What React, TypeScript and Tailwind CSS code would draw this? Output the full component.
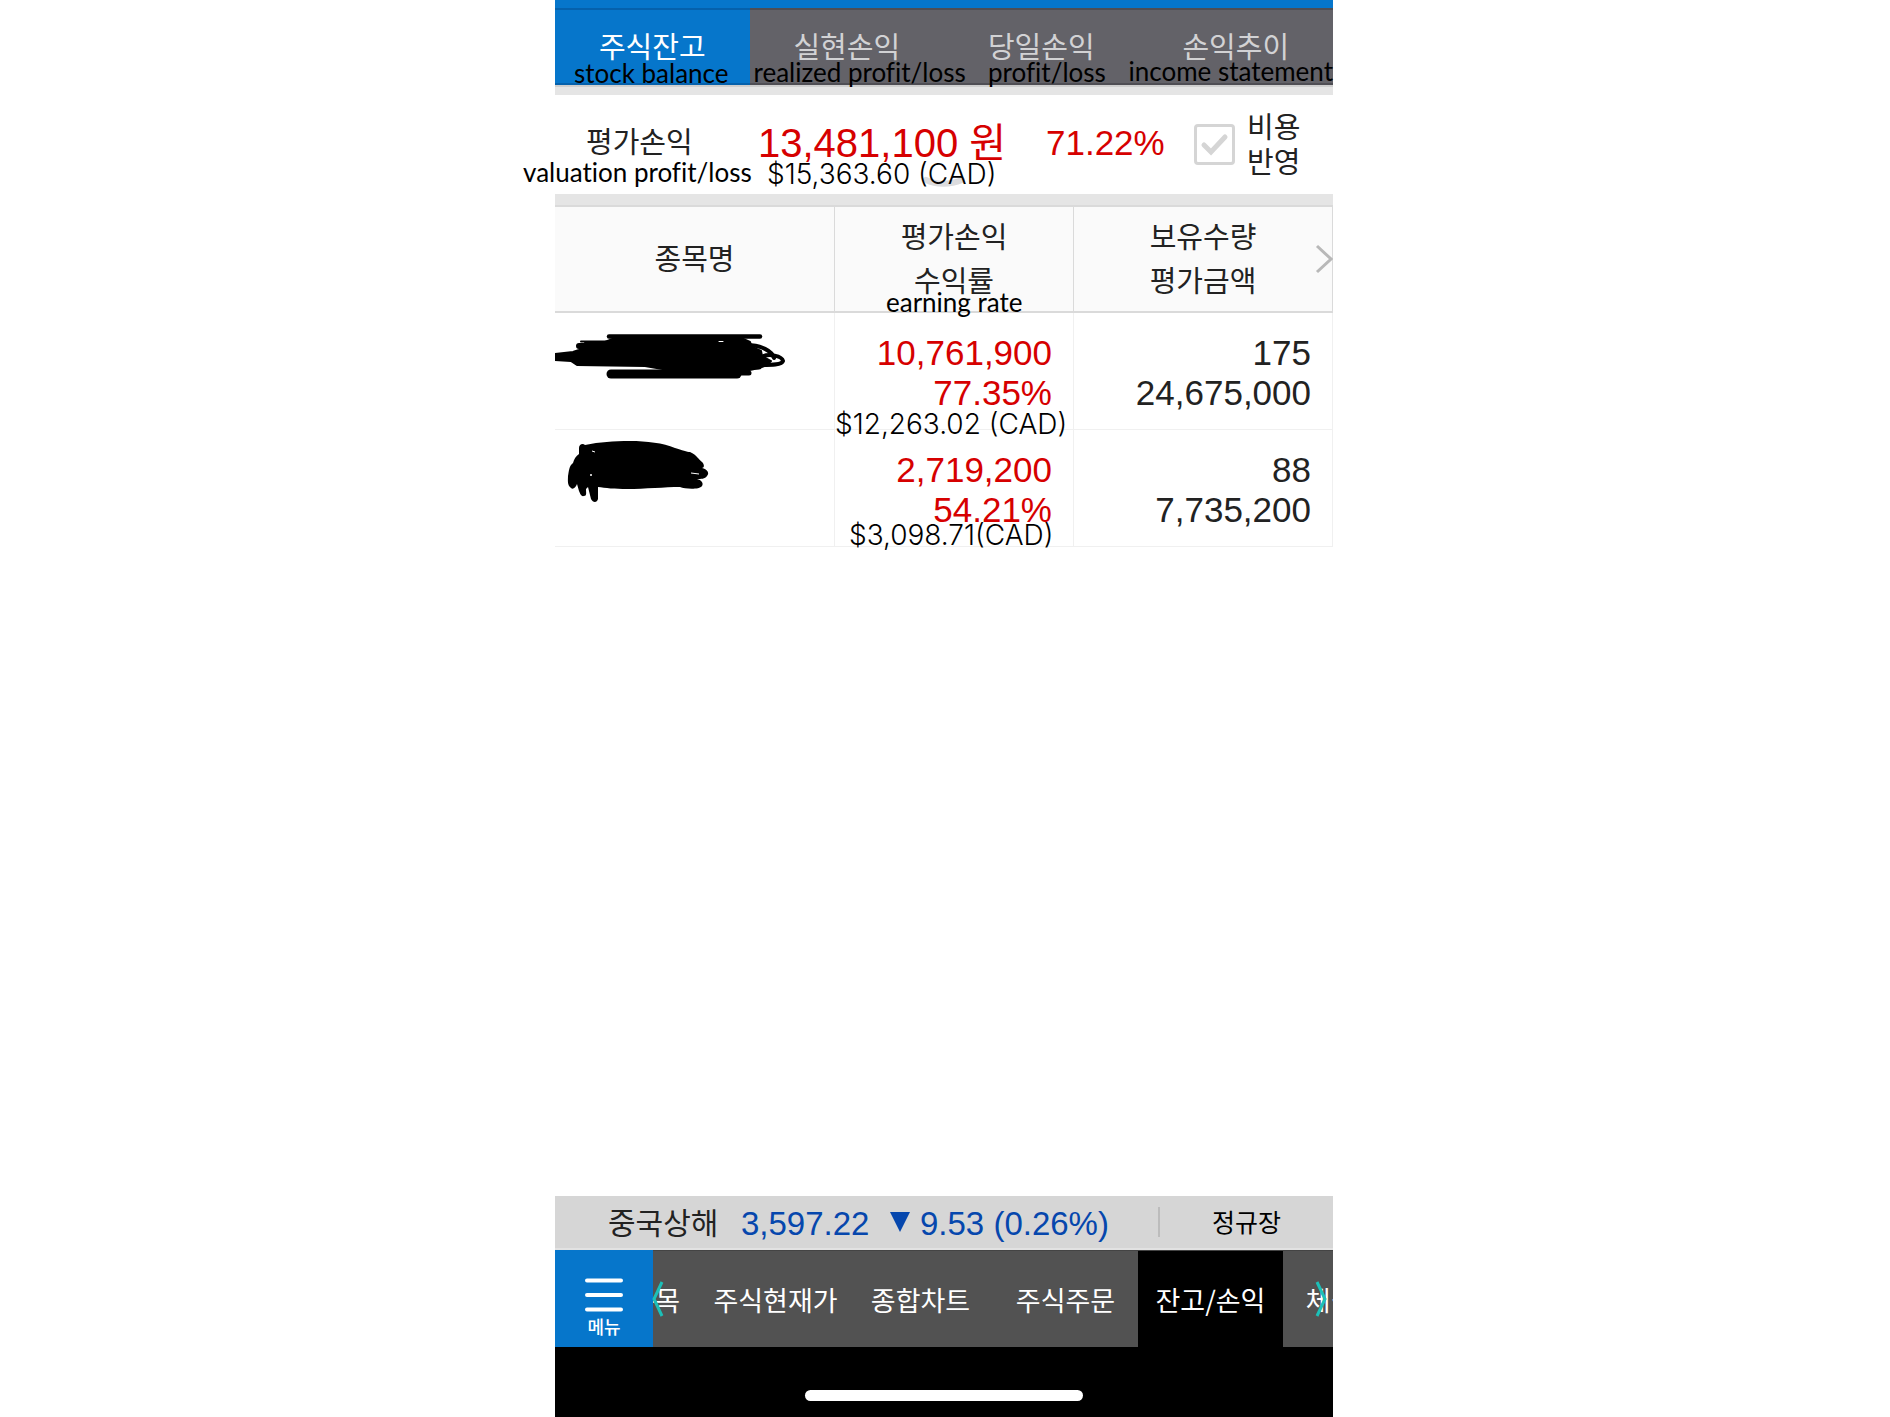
import React from "react";

const KR = "font-['Noto_Sans_CJK_KR',sans-serif]";
const NUM = "font-['Liberation_Sans','Noto_Sans_CJK_KR',sans-serif]";
const NOTE =
  "pointer-events-none absolute whitespace-nowrap font-['Lato',sans-serif] text-[26px] font-normal leading-8 text-black [font-variant-ligatures:none]";
const MONEY =
  "pointer-events-none absolute whitespace-nowrap font-['Inter',sans-serif] text-[28px] font-light leading-8 text-black";

const tabs = [
  { label: "주식잔고", note: "stock balance", pos: "left-[19px] top-[47px]" },
  { label: "실현손익", note: "realized profit/loss", pos: "left-[4px] top-[46px]" },
  { label: "당일손익", note: "profit/loss", pos: "left-[44px] top-[46px]" },
  { label: "손익추이", note: "income statement", pos: "right-0 top-[45px]" },
];

const holdings = [
  {
    gain: "10,761,900",
    rate: "77.35%",
    qty: "175",
    value: "24,675,000",
    note: "$12,263.02 (CAD)",
    pos: "left-0 top-[95px]",
    scribble: <ScribbleWide />,
  },
  {
    gain: "2,719,200",
    rate: "54.21%",
    qty: "88",
    value: "7,735,200",
    note: "$3,098.71(CAD)",
    pos: "left-[14px] top-[89px]",
    scribble: <ScribbleBlob />,
  },
];

const shortcuts = ["관심종목", "주식현재가", "종합차트", "주식주문", "잔고/손익", "체결내역"];

function ScribbleWide() {
  return (
    <svg viewBox="0 0 279 116" className="block h-[116px] w-[279px]" role="img" aria-label="Hidden name" fill="none" stroke="#000" strokeLinecap="round" strokeLinejoin="round">
      <path d="M54 23.500H205" strokeWidth="4.500" />
      <path d="M26 28.500H60" strokeWidth="2" />
      <path d="M56 61H182" strokeWidth="9" />
      <path d="M176 60H194M184 54H204" strokeWidth="5" />
      <path
        d="M0 41L18 39L24 37L32 34L30 29L50 29L60 25L186 25L195 29L197 34L206 38L207 43L216 48L212 52L204 55L190 58L175 59H125L90 53L22 52L16 48L0 47Z"
        fill="#000"
        strokeWidth="2"
      />
      <path d="M24 33H60M0 44H20" strokeWidth="6" />
      <path d="M192 32C206 32 217 38 219 45" strokeWidth="4" />
      <path d="M206 44C214 40 227 43 228 48C227 52 216 52 206 52" strokeWidth="4" />
      <path d="M168 28.500H164" stroke="#fff" strokeWidth="1" />
    </svg>
  );
}

function ScribbleBlob() {
  return (
    <svg viewBox="0 0 279 116" className="block h-[116px] w-[279px]" role="img" aria-label="Hidden name">
      <path
        d="M24 18C24 14 28 13 30 15C45 12 58 11 75 11C92 11 108 13 120 18C127 20 132 22 135 22C142 25 144 30 147 32C150 35 149 38 147 38C152 39 155 43 152 46C150 49 146 49 142 49C146 50 149 53 147 56C144 60 130 59 125 57C110 57 90 59 72 59C60 59 50 58 43 57V69C42 73 38 73 36 69L33 57L31 59C31 63 32 66 29 66C26 67 25 63 24 61L22 54C21 57 18 60 16 58C12 55 13 50 13 46C14 41 14 36 18 33C19 29 21 26 24 24Z"
        fill="#000"
      />
      <path d="M37 21L40 22M136 43L144 44" stroke="#fff" strokeWidth="1" />
      <circle cx="36" cy="45" r="1" fill="#fff" />
    </svg>
  );
}

export default function App() {
  return (
    <div className={`flex min-h-screen bg-white pr-0.5 text-[#222] ${KR}`}>
      <main className="mx-auto flex w-full max-w-[778px] flex-col">
        <header>
          <div className="h-2 bg-[#0676cb]" />
          <nav className="grid h-[77px] grid-cols-4 border-y-2 border-[#4f4e54] bg-[#636268]">
            {tabs.map((t, i) => (
              <div key={t.label} className={i === 0 ? "relative -my-0.5 border-y-2 border-[#0561ac] bg-[#0676cb]" : "relative"}>
                <button
                  className={
                    i === 0
                      ? "block h-[73px] w-full text-[29px] leading-[70px] text-white"
                      : "block h-[73px] w-full text-[29px] leading-[70px] text-[#d2d2d4]"
                  }
                >
                  <span className="block h-[73px]">{t.label}</span>
                </button>
                <span className={`${NOTE} ${t.pos}`}>{t.note}</span>
              </div>
            ))}
          </nav>
          <div className="h-2.5 border-t-2 border-[#cfcfcf] bg-[#e5e5e5]" />
        </header>

        <section className="relative flex h-[99px] items-center">
          <h2 className="w-[195px] pb-2.5 pl-[31px] text-[29px] font-normal leading-9">평가손익</h2>
          <p className={`w-[292px] pb-1 pl-2 text-[40px] leading-[48px] text-[#d60000] ${NUM}`}>
            13,481,100 <span>원</span>
          </p>
          <p className={`w-[152px] pb-1 pl-1 text-[35px] leading-[48px] text-[#d60000] ${NUM}`}>71.22%</p>
          <label className="flex items-center gap-3 text-[29px] leading-[35px]">
            <span className="relative block size-[41px]">
              <input type="checkbox" className="block size-[41px] appearance-none rounded-sm border-[3px] border-[#d5d5d5] bg-white" />
              <svg viewBox="0 0 41 41" className="pointer-events-none absolute inset-0" fill="none" stroke="#d5d5d5" strokeWidth="5">
                <path d="M10 21L17 28L31 13" strokeLinecap="round" />
              </svg>
            </span>
            <span className="pb-1">
              비용
              <br />
              반영
            </span>
          </label>
          <svg viewBox="0 0 44 12" className="absolute left-[367px] top-[81px] h-3 w-11" fill="none" stroke="#dcdcde" strokeWidth="6" strokeLinecap="round">
            <path d="M4 4C14 9 28 9 40 4" />
          </svg>
          <span className={`${NOTE} -left-8 top-[61px]`}>valuation profit/loss</span>
          <span className={`${MONEY} left-[212px] top-[63px]`}>$15,363.60 (CAD)</span>
        </section>

        <div className="h-[11px] bg-[#e5e5e5]" />

        <table className="w-full table-fixed border-separate border-spacing-0">
          <colgroup>
            <col className="w-[280px]" />
            <col className="w-[239px]" />
            <col />
          </colgroup>
          <thead className="bg-[#fafafa] text-[29px] leading-[44px]">
            <tr className="h-[108px]">
              <th className="border-y-2 border-r border-[#dadada] p-0 pb-1 font-normal">종목명</th>
              <th className="relative border-y-2 border-r border-[#dadada] p-0 pb-1 font-normal">
                평가손익
                <br />
                수익률
                <span className={`${NOTE} left-[51px] top-[79px]`}>earning rate</span>
              </th>
              <th className="relative border-y-2 border-r border-[#dadada] p-0 pb-1 font-normal">
                보유수량
                <br />
                평가금액
                <button aria-label="Next columns" className="absolute -right-px top-[37px] block">
                  <svg viewBox="0 0 18 30" className="block h-[30px] w-[18px]" fill="none" stroke="#b8b8b8" strokeWidth="3">
                    <path d="M2 2L16 15L2 28" />
                  </svg>
                </button>
              </th>
            </tr>
          </thead>
          <tbody className={`text-[35px] leading-10 ${NUM}`}>
            {holdings.map((h) => (
              <tr key={h.gain}>
                <td className="border-b border-r border-[#f0f0f0] p-0 align-top">{h.scribble}</td>
                <td className="relative border-b border-r border-[#f0f0f0] p-0 pr-[21px] pt-5 text-right align-top text-[#d60000]">
                  {h.gain}
                  <br />
                  {h.rate}
                  <span className={`${MONEY} ${h.pos}`}>{h.note}</span>
                </td>
                <td className="border-b border-r border-[#f0f0f0] p-0 pr-[21px] pt-5 text-right align-top">
                  {h.qty}
                  <br />
                  {h.value}
                </td>
              </tr>
            ))}
          </tbody>
        </table>

        <footer className="mt-auto">
          <div className="flex h-[54px] items-center border-b-2 border-[#e2e2e2] bg-[#d6d6d6]">
            <span className="w-[186px] pb-0.5 pl-[53px] text-[30px] leading-10">중국상해</span>
            <span className={`w-[149px] pt-1 text-[33px] leading-10 text-[#0647ad] ${NUM}`}>3,597.22</span>
            <svg viewBox="0 0 20 20" className="mr-2.5 size-5" fill="#0647ad">
              <path d="M0 0H20L10 20Z" />
            </svg>
            <span className={`w-[238px] pt-1 text-[33px] leading-10 text-[#0647ad] ${NUM}`}>9.53 (0.26%)</span>
            <span className="h-[30px] w-0.5 bg-[#bcbcbc]" />
            <span className="flex-1 pb-0.5 text-center text-[25px] leading-10 text-black">정규장</span>
          </div>
          <div className="relative flex h-[97px]">
            <button className="flex w-[98px] shrink-0 flex-col items-center bg-[#0676cb] pt-7 text-[18px] font-medium leading-6 text-white">
              <svg viewBox="0 0 38 34" className="mb-0.5 h-[34px] w-[38px]" stroke="#fff" strokeWidth="4" strokeLinecap="round">
                <path d="M2 2.500H36M2 17H36M2 31.500H36" />
              </svg>
              메뉴
            </button>
            <nav className="flex flex-1 justify-center overflow-hidden border-t border-[#444] bg-[#525252]">
              {shortcuts.map((s, i) => (
                <a
                  key={s}
                  href="#"
                  className={
                    i === 4
                      ? "block w-[145px] shrink-0 bg-black text-center text-[27px] leading-[97px] text-white"
                      : "block w-[145px] shrink-0 text-center text-[27px] leading-[97px] text-white"
                  }
                >
                  {s}
                </a>
              ))}
            </nav>
            <svg viewBox="0 0 12 36" className="absolute left-[97px] top-[31px] h-9 w-3" fill="none" stroke="#1cc0b8" strokeWidth="3">
              <path d="M10 1L2 18L10 35" />
            </svg>
            <svg viewBox="0 0 12 36" className="absolute right-[6px] top-[31px] h-9 w-3" fill="none" stroke="#1cc0b8" strokeWidth="3">
              <path d="M2 1L10 18L2 35" />
            </svg>
          </div>
          <div className="flex h-[70px] items-end justify-center bg-black pb-4">
            <div className="h-[11px] w-[278px] rounded-full bg-white" />
          </div>
        </footer>
      </main>
    </div>
  );
}
